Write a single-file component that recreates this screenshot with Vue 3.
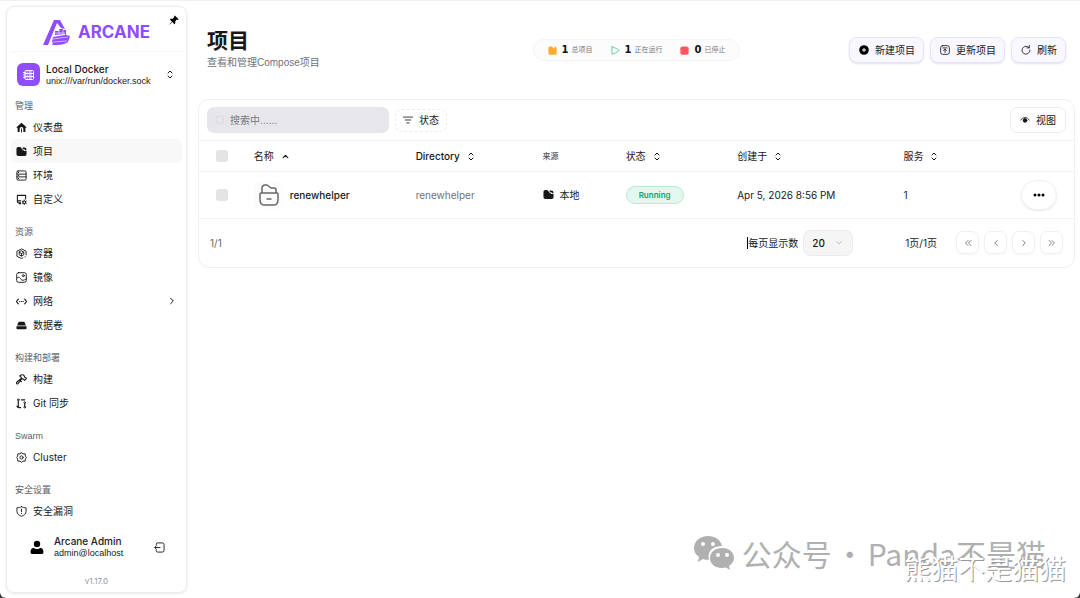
<script setup>
import { ref } from 'vue'

const icons = {
  home: '<path fill="currentColor" stroke="none" d="M12 1.500 1 11.500 2.500 13l1-.8V21a1 1 0 0 0 1 1h3.500v-7a4 4 0 0 1 8 0v7h3.500a1 1 0 0 0 1-1v-8.800l1 .8 1.500-1.500z"/><path d="M12 15v7"/>',
  folder: '<path fill="currentColor" stroke="none" d="M1 6a4 4 0 0 1 4-4h4.500l3 4H14v3.500h3.500V11H23v7a4 4 0 0 1-4 4H5a4 4 0 0 1-4-4z"/><path fill="currentColor" stroke="none" d="M14.500 3h3.500a5 5 0 0 1 5 5v1.500h-4V7h-4.500z"/>',
  server: '<rect x="2" y="2" width="20" height="20" rx="2.500"/><path d="M2 9h20M2 15h20M5 5.500h1M5 12h1M5 18.500h1"/>',
  custom: '<path d="M10 19H5a2 2 0 0 1-2-2V3h18v8M3 15h7M7 21h3" stroke-width="2.300"/><circle cx="18" cy="18" r="3"/><path d="M18 13v2M18 21v2M13.500 15.500l2 1M20.500 19.500l2 1M22.500 15.500l-2 1M13.500 20.500l2-1"/>',
  box: '<path d="M15 21.500 12 23 2 18V7l10-5 10 5v8M20 19v.5"/><path d="m12 6.500 5 2.700v5.600L12 17.500l-5-2.700V9.200zM7 9.200l5 2.800 5-2.800M12 12v5.500"/>',
  image: '<rect x="1.500" y="1.500" width="21" height="21" rx="4"/><circle cx="16" cy="8" r="2.200"/><path d="M2 13c5-4 7 0 9 3s6 3 11-1"/>',
  network: '<path d="M5 7 1 12l4 5M19 7l4 5-4 5M8 12h.5M12 12h.5M15.500 12h.5" stroke-width="2.500"/>',
  drive: '<path fill="currentColor" stroke="none" d="M7 4h10a2 2 0 0 1 2 1.500L21.500 12h-19L5 5.500A2 2 0 0 1 7 4zM1 13.500h22V18a2 2 0 0 1-2 2H3a2 2 0 0 1-2-2z"/>',
  hammer: '<path d="m13 10-8.500 11a2 2 0 0 1-3-3L12 9M8 4c4-3 8-3 10 0l1 3 4 2-4 5-3-3-2 0-3-4zM9 14l3 3" stroke-width="2.300"/>',
  git: '<circle cx="5" cy="4" r="1.800"/><circle cx="19" cy="10" r="1.800"/><circle cx="19" cy="20" r="1.800"/><path d="M5 7v11c0 2 1 3 3 3h2M2 18l3 3M19 12v6M12 4h7" stroke-width="2.500"/>',
  cluster: '<path d="m12 1.500 3 2.500h5l.5 5 2 3-2 3-.5 5h-5l-3 2.500L9 20H4l-.5-5-2-3 2-3L4 4h5z"/><circle cx="12" cy="12" r="3.500"/>',
  shield: '<path d="M12 1.500c-3 2-6.500 2.500-10 2.500v8c0 5 4.500 8.500 10 10.500 5.500-2 10-5.500 10-10.500V4c-3.500 0-7-.5-10-2.500zM12 7v5.500M12 16v.5"/>',
}

const groups = [
  { label: '管理', items: [
    { icon: 'home', text: '仪表盘' },
    { icon: 'folder', text: '项目', active: true },
    { icon: 'server', text: '环境' },
    { icon: 'custom', text: '自定义' },
  ] },
  { label: '资源', items: [
    { icon: 'box', text: '容器' },
    { icon: 'image', text: '镜像' },
    { icon: 'network', text: '网络', more: true },
    { icon: 'drive', text: '数据卷' },
  ] },
  { label: '构建和部署', items: [
    { icon: 'hammer', text: '构建' },
    { icon: 'git', text: 'Git 同步' },
  ] },
  { label: 'Swarm', items: [{ icon: 'cluster', text: 'Cluster' }] },
  { label: '安全设置', items: [{ icon: 'shield', text: '安全漏洞' }] },
]

const columns = [
  { text: '名称', sort: 'up', cls: 'c-name' },
  { text: 'Directory', sort: 'both', cls: 'c-dir' },
  { text: '来源', cls: 'c-source' },
  { text: '状态', sort: 'both', cls: 'c-status' },
  { text: '创建于', sort: 'both', cls: 'c-created' },
  { text: '服务', sort: 'both', cls: 'c-services' },
]

const pagers = [
  { label: '首页', d: 'm12 6-6 6 6 6M19 6l-6 6 6 6' },
  { label: '上一页', d: 'm15 6-6 6 6 6' },
  { label: '下一页', d: 'm9 6 6 6-6 6' },
  { label: '末页', d: 'm5 6 6 6-6 6M12 6l6 6-6 6' },
]

const query = ref('')
const pageSize = ref('20')
</script>

<template>
  <div class="page">
    <aside class="sidebar">
      <div class="brand">
        <svg class="brand-mark" viewBox="0 0 27 27" aria-hidden="true">
          <path fill="#8f4dff" d="M11 1h6l5 9-4-1-4-5L5 26H0z" />
          <path fill="#8f4dff" d="M12 12h4v-2h4v1h3v5l4 1-2 6c-4 3-10 3-16 3l1-2-1-1 1-5 12-2v-1l-10 1z" />
          <path fill="none" stroke="#fff" stroke-width="0.6" d="M12 14h10M16 10v5M20 11v4M10 20l15-2M10 23l14-1" />
        </svg>
        <span class="brand-name">ARCANE</span>
        <button class="pin" aria-label="固定侧栏">
          <svg viewBox="0 0 24 24"><path fill="currentColor" d="m14 1 9 9-2 2-2-1-4 4v5l-2 2-5-5-6 6-1-1 6-6-5-5 2-2h5l4-4-1-2z" /></svg>
        </button>
      </div>

      <button class="env">
        <span class="env-icon">
          <svg viewBox="0 0 24 24" class="line"><rect x="4" y="3" width="17" height="18" rx="2" /><path d="M4 9h17M4 15h17M8 6h1M8 12h1M8 18h1M12 6h5M12 12h5M12 18h5M1 7h3M1 12h3M1 17h3" /></svg>
        </span>
        <span class="two-line">
          <strong>Local Docker</strong>
          <span>unix:///var/run/docker.sock</span>
        </span>
        <svg class="line updown" viewBox="0 0 12 18"><path d="m2 6 4-4 4 4M2 12l4 4 4-4" /></svg>
      </button>

      <nav class="nav">
        <section v-for="g in groups" :key="g.label">
          <h2>{{ g.label }}</h2>
          <a v-for="i in g.items" :key="i.text" href="#" :class="{ active: i.active }">
            <svg class="line nav-icon" viewBox="0 0 24 24" v-html="icons[i.icon]"></svg>
            <span>{{ i.text }}</span>
            <svg v-if="i.more" class="line chevron" viewBox="0 0 24 24"><path d="m8 4 8 8-8 8" /></svg>
          </a>
        </section>
      </nav>

      <div class="user">
        <svg class="avatar" viewBox="0 0 24 24"><circle cx="12" cy="6" r="5.500" /><path d="M1 19c0-6 5-7 7-5.500 2 1.500 6 1.500 8 0 2-1.500 7-.5 7 5.500v2a2 2 0 0 1-2 2H3a2 2 0 0 1-2-2z" /></svg>
        <span class="two-line">
          <strong>Arcane Admin</strong>
          <span>admin@localhost</span>
        </span>
        <button class="logout" aria-label="退出">
          <svg class="line" viewBox="0 0 24 24"><path d="M5 6V5a3 3 0 0 1 3-3h10a4 4 0 0 1 4 4v12a4 4 0 0 1-4 4H8a3 3 0 0 1-3-3v-1M13 12H2M5 8l-3 4 3 4" /></svg>
        </button>
      </div>
      <p class="version">v1.17.0</p>
    </aside>

    <main class="main">
      <header class="head">
        <div>
          <h1>项目</h1>
          <p>查看和管理Compose项目</p>
        </div>
        <ul class="stats">
          <li>
            <svg viewBox="0 0 24 24"><path fill="#ffab2e" d="M1 5a4 4 0 0 1 4-4h6l3 5h3V2h2a4 4 0 0 1 4 4v13a4 4 0 0 1-4 4H5a4 4 0 0 1-4-4z" /></svg>
            <b>1</b><span>总项目</span>
          </li>
          <li>
            <svg viewBox="0 0 24 24" class="line play"><path d="M3 2c6 2 13 5 19 10-6 5-13 8-19 10-1-6-1-14 0-20z" /></svg>
            <b>1</b><span>正在运行</span>
          </li>
          <li>
            <svg viewBox="0 0 24 24"><rect x="1" y="1" width="22" height="22" rx="5" fill="#fb5560" /></svg>
            <b>0</b><span>已停止</span>
          </li>
        </ul>
        <div class="actions">
          <button>
            <svg viewBox="0 0 24 24"><circle cx="12" cy="12" r="11.500" /><path d="M12 7v10M7 12h10" stroke="#fff" stroke-width="2.500" /></svg>新建项目
          </button>
          <button>
            <svg class="line" viewBox="0 0 24 24"><rect x="1.500" y="1.500" width="21" height="21" rx="5" /><path d="M7 7h10M12 18v-8M8.500 13l3.500-3 3.500 3" /></svg>更新项目
          </button>
          <button>
            <svg class="line" viewBox="0 0 24 24"><path d="M19 6a9.500 9.500 0 1 0 2.500 6M20 1v6h-6" /></svg>刷新
          </button>
        </div>
      </header>

      <section class="card">
        <div class="toolbar">
          <label class="search">
            <svg class="line" viewBox="0 0 24 24"><circle cx="11" cy="11" r="9" /><path d="m18 18 4 4" /></svg>
            <input v-model="query" type="text" placeholder="搜索中......" aria-label="搜索" />
          </label>
          <button class="filter">
            <svg class="line" viewBox="0 0 24 24"><path d="M1 5h22M5 12h14M9 19h6" /></svg>状态
          </button>
          <button class="view">
            <svg class="line" viewBox="0 0 24 24"><path d="M2 12c4-8 16-8 20 0" /><circle cx="12" cy="13" r="4.500" fill="currentColor" /></svg>视图
          </button>
        </div>

        <table>
          <thead>
            <tr>
              <th class="c-check"><input type="checkbox" aria-label="全选" /></th>
              <th v-for="c in columns" :key="c.text" :class="c.cls">
                <button v-if="c.sort" class="sort">
                  {{ c.text }}
                  <svg v-if="c.sort === 'both'" class="line updown" viewBox="0 0 12 18"><path d="m2 6 4-4 4 4M2 12l4 4 4-4" /></svg>
                  <svg v-else class="line up" viewBox="0 0 12 12"><path d="m2 8 4-4 4 4" /></svg>
                </button>
                <template v-else>{{ c.text }}</template>
              </th>
              <th class="c-more"></th>
            </tr>
          </thead>
          <tbody>
            <tr>
              <td class="c-check"><input type="checkbox" aria-label="选择 renewhelper" /></td>
              <td>
                <a class="project" href="#">
                  <span class="thumb"><svg class="line" viewBox="0 0 20 22"><path d="M3 9V4a3 3 0 0 1 3-3h2l4 3h3a2 2 0 0 1 2 2v3M1 10c0-1 .5-1 1-1h16c.5 0 1 0 1 1v5c0 4-1 6-4 6H5c-3 0-4-2-4-6zM8 15h4" /></svg></span>
                  renewhelper
                </a>
              </td>
              <td class="muted">renewhelper</td>
              <td><span class="source"><svg class="line" viewBox="0 0 24 24" v-html="icons.folder"></svg>本地</span></td>
              <td><span class="badge">Running</span></td>
              <td>Apr 5, 2026 8:56 PM</td>
              <td>1</td>
              <td class="c-more"><button class="more" aria-label="更多"><svg viewBox="0 0 24 8"><circle cx="4" cy="4" r="3" /><circle cx="12" cy="4" r="3" /><circle cx="20" cy="4" r="3" /></svg></button></td>
            </tr>
          </tbody>
        </table>

        <footer class="foot">
          <span class="count">1/1</span>
          <label class="size-label" for="page-size">每页显示数</label>
          <span class="select">
            <select id="page-size" v-model="pageSize">
              <option>20</option>
              <option>50</option>
              <option>100</option>
            </select>
            <svg class="line" viewBox="0 0 24 24"><path d="m5 8 7 7 7-7" /></svg>
          </span>
          <span class="pages">1页/1页</span>
          <div class="pager">
            <button v-for="p in pagers" :key="p.label" :aria-label="p.label">
              <svg class="line" viewBox="0 0 24 24"><path :d="p.d" /></svg>
            </button>
          </div>
        </footer>
      </section>
    </main>

    <div class="account">
      <svg viewBox="0 0 42 36" aria-hidden="true">
        <path fill="#b0b0b0" d="M15 1C7 1 1 6 1 13c0 4 2 7 5 9l-1 5 5-3c2 .7 4 1 6 .8C14 16 20 11 29 11 28 5 22 1 15 1z" />
        <path fill="#b0b0b0" d="M29 13c-7 0-12 4-12 10s5 10 12 10l4-.6 4 2.600-1-4c3-2 5-5 5-8 0-6-5-10-12-10z" />
        <circle cx="10" cy="9" r="2" fill="#fff" /><circle cx="20" cy="9" r="2" fill="#fff" /><circle cx="25" cy="20" r="2" fill="#fff" /><circle cx="34" cy="20" r="2" fill="#fff" />
      </svg>
      <span>公众号</span><span>·</span><span>Panda不是猫</span>
    </div>
    <div class="signature">熊猫不是猫猫</div>
  </div>
</template>

<style>
html { background: #3a3a3a; }
</style>

<style scoped>
* { box-sizing: border-box; }
.page {
  position: relative;
  display: flex;
  align-items: stretch;
  gap: 11px;
  min-height: 100vh;
  padding: 5px 5px 5px 6px;
  border-top: 1px solid #f0f0f1;
  border-radius: 0 0 6px 6px;
  background: #fff;
  color: #18181b;
  font-family: Inter, "Noto Sans CJK SC", sans-serif;
  font-size: 10px;
  line-height: 12px;
}
button { border: 0; padding: 0; background: none; color: inherit; font: inherit; }
a { color: inherit; text-decoration: none; }
h1, h2, p, ul { margin: 0; padding: 0; }
svg { display: block; flex: none; }
.line { fill: none; stroke: currentColor; stroke-width: 2; stroke-linecap: round; stroke-linejoin: round; }
.updown { width: 6px; height: 9px; }
.two-line { display: flex; flex-direction: column; flex: 1; text-align: left; }
.two-line strong { font-weight: 500; }
.two-line span { font-family: "Liberation Sans", sans-serif; font-size: 9px; }

.sidebar {
  display: flex;
  flex-direction: column;
  flex: none;
  width: 181px;
  padding: 0 4px;
  border: 1px solid #ececee;
  border-radius: 8px;
  box-shadow: 0 1px 3px #00000018;
}
.brand {
  position: relative;
  display: flex;
  align-items: center;
  justify-content: center;
  gap: 8px;
  height: 45px;
  padding-top: 6px;
  border-bottom: 1px solid #f7f7f8;
  color: #8f4dff;
}
.brand-mark { width: 27px; height: 27px; }
.brand-name { font-size: 17px; font-weight: 700; line-height: 20px; }
.pin { position: absolute; top: 8px; right: 3px; color: #000; }
.pin svg { width: 10px; height: 10px; }
.env { display: flex; align-items: center; gap: 6px; height: 43px; padding: 2px 9px 0 6px; }
.env-icon { display: grid; place-items: center; width: 23px; height: 23px; border-radius: 6px; background: #8f4dff; color: #fff; }
.env-icon svg { width: 12px; height: 12px; }
.nav section { margin-bottom: 10px; }
.nav h2 { height: 20px; padding: 1px 4px 0; color: #606066; font-family: "Liberation Sans", "Noto Sans CJK SC", sans-serif; font-size: 9px; font-weight: 400; line-height: 20px; }
.nav a { display: flex; align-items: center; gap: 6px; height: 24px; padding: 0 6px 0 5px; border-radius: 6px; }
.nav a span { flex: 1; }
.nav a.active { background: #f8f8f8; }
.nav-icon { width: 11px; height: 11px; }
.chevron { width: 8px; height: 8px; stroke-width: 3; }
.user { display: flex; align-items: center; gap: 10px; margin-top: auto; padding: 0 17px 0 19px; }
.avatar { width: 14px; height: 15px; }
.logout svg { width: 11px; height: 11px; }
.version { padding: 16px 0 5px; color: #96969c; font-size: 8px; text-align: center; }

.main { flex: 1; min-width: 0; }
.head { display: grid; grid-template-columns: 1fr auto 1fr; align-items: center; height: 93px; padding: 0 9px 5px; }
h1 { font-size: 21px; font-weight: 700; line-height: 26px; }
.head p { color: #71717a; font-family: "Liberation Sans", "Noto Sans CJK SC", sans-serif; line-height: 18px; }
.stats { display: flex; gap: 18px; padding: 0 14px; border: 1px solid #f5f5f5; border-radius: 12px; background: #fcfcfc; list-style: none; }
.stats li { display: flex; align-items: center; height: 20px; color: #77777c; font-size: 7px; }
.stats svg { width: 9px; height: 9px; margin-right: 5px; }
.stats b { margin-right: 3px; color: #111; font-family: "DejaVu Sans", sans-serif; font-size: 10px; }
.play { color: #2fbf86; }
.actions { display: flex; justify-content: flex-end; gap: 6px; }
.actions button {
  display: flex;
  align-items: center;
  gap: 6px;
  height: 26px;
  padding: 0 8px 0 9px;
  border: 1px solid #e9e3fa;
  border-radius: 8px;
  background: #f9f7ff;
  box-shadow: 0 1px 2px #7c5cd630;
}
.actions svg { width: 10px; height: 10px; }

.card { border: 1px solid #f0f0f1; border-radius: 11px; }
.toolbar { display: flex; align-items: center; gap: 6px; height: 40px; padding: 0 8px; }
.search { display: flex; align-items: center; gap: 5px; flex: 0 0 182px; min-width: 0; height: 26px; padding: 0 8px; border-radius: 7px; background: #e7e7eb; }
.search svg { width: 10px; height: 10px; color: #d6d6da; }
.search input { flex: 1; width: 0; min-width: 0; padding: 0; border: 0; outline: 0; background: none; color: inherit; font: inherit; }
.search input::placeholder { color: #77777e; opacity: 1; }
.filter, .view { display: flex; align-items: center; gap: 6px; padding: 0 7px; border-radius: 7px; }
.filter { height: 23px; border: 1px dashed #ececee; }
.view { height: 26px; margin-left: auto; padding: 0 9px; border: 1px solid #ededef; }
.filter svg, .view svg { width: 10px; height: 10px; }

table { width: 100%; table-layout: fixed; border-collapse: collapse; }
th, td { padding: 0 0 0 11px; border-top: 1px solid #f2f2f3; text-align: left; }
th { height: 31px; color: #55555a; font-size: 8px; font-weight: 500; }
td { height: 46px; }
.c-check { width: 5%; padding-left: 17px; }
.c-name { width: 18.5%; }
.c-dir { width: 14.5%; }
.c-source { width: 9.5%; }
.c-status { width: 12.75%; }
.c-created { width: 19%; }
.c-services { width: 13%; }
.c-more { padding: 0 17px 0 0; }
.sort { display: flex; align-items: center; gap: 8px; color: #18181b; font-size: 10px; }
.c-status .sort, .c-created .sort, .c-services .sort, .c-name .sort { font-weight: 400; }
.up { width: 7px; height: 7px; }
input[type="checkbox"] { display: block; appearance: none; width: 12px; height: 12px; margin: 0; border-radius: 3px; background: #e4e4e7; }
.project { display: flex; align-items: center; gap: 6px; font-weight: 500; }
.thumb { display: grid; place-items: center; width: 30px; height: 28px; border-radius: 6px; background: #fcfcfc; color: #66666c; }
.thumb svg { width: 20px; height: 22px; stroke-width: 1.5; }
.muted { color: #71717a; }
.source { display: flex; align-items: center; gap: 6px; }
.source svg { width: 11px; height: 11px; }
.badge { display: inline-block; padding: 0 12px; border: 1px solid #b5ecd4; border-radius: 9px; background: #e2f8ee; color: #269b6e; font-size: 8px; font-weight: 600; line-height: 16px; }
.more { display: grid; place-items: center; width: 36px; height: 30px; margin-left: auto; border: 1px solid #f0f0f1; border-radius: 15px; box-shadow: 0 1px 2px #00000018; }
.more svg { width: 12px; height: 4px; }

.foot { display: flex; align-items: center; height: 49px; padding: 0 11px; border-top: 1px solid #f2f2f3; }
.count { color: #66666c; }
.size-label { margin-left: auto; border-left: 1px solid #000; }
.select { position: relative; margin-left: 5px; }
.select select { display: block; appearance: none; width: 50px; height: 26px; padding: 0 8px; border: 1px solid #ececec; border-radius: 7px; background: #f5f5f5; color: inherit; font: inherit; font-weight: 500; }
.select svg { position: absolute; top: 9px; right: 10px; width: 8px; height: 8px; color: #a0a0a5; pointer-events: none; }
.pages { margin: 0 19px 0 52px; }
.pager { display: flex; gap: 5px; }
.pager button { display: grid; place-items: center; width: 23px; height: 23px; border: 1px solid #f0f0f1; border-radius: 7px; box-shadow: 0 1px 2px #0000000a; color: #66666c; }
.pager svg { width: 10px; height: 10px; }

.account { position: absolute; right: 34px; bottom: 27px; display: flex; align-items: center; gap: 3px; color: #b0b0b0; font-family: "Noto Sans CJK SC", sans-serif; font-size: 30px; line-height: 36px; }
.account svg { width: 42px; height: 36px; margin-right: 4px; }
.signature { position: absolute; right: 14px; bottom: 14px; color: #fff; font-family: "Noto Sans CJK SC", sans-serif; font-size: 27px; line-height: 32px; text-shadow: 1px 1px 0 #999; }
</style>
